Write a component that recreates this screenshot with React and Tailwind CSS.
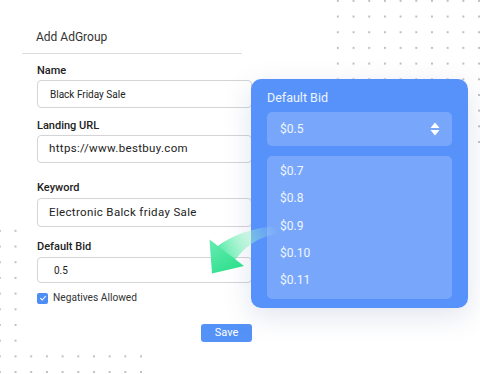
import React from "react";

const dots =
  "absolute bg-[radial-gradient(circle,#bfbfbf_0.8px,transparent_1.3px)] bg-[length:15.7px_15.7px]";

const Field = ({ label, value, className, inputClass, textClass }) => (
  <div className={className}>
    <div className="text-[11px] leading-[14px] font-medium text-[#222]">{label}</div>
    <div
      className={`flex items-center rounded-[4px] border border-[#d4d4d4] bg-white ${inputClass}`}
    >
      <span className={textClass}>{value}</span>
    </div>
  </div>
);

const BidOptions = ["$0.7", "$0.8", "$0.9", "$0.10", "$0.11"];

export default function App() {
  return (
    <div
      className="relative w-[480px] h-[374px] overflow-hidden bg-white text-[#222]"
      style={{ fontFamily: "Roboto, 'Liberation Sans', sans-serif" }}
    >
      {/* dot grids in the background */}
      <div className={`${dots} left-[330px] top-[-7px] w-[157px] h-[157px]`} />
      <div className={`${dots} left-[-8px] top-[223px] w-[157px] h-[157px]`} />

      {/* form card */}
      <div className="relative z-10 ml-[22px] w-[230px] h-[350px] bg-white pt-[27px]">
        <div className="pl-[14px] text-[12px] leading-[20px] text-[#333]">Add AdGroup</div>
        <div className="mt-[6px] w-[220px] h-px bg-[#dedede]" />

        <div className="pl-[15px]">
          <Field
            className="mt-[10px]"
            label="Name"
            value="Black Friday Sale"
            inputClass="mt-[2px] h-[28px] pl-[12px]"
            textClass="text-[10px] text-[#222]"
          />
          <Field
            className="mt-[11px]"
            label="Landing URL"
            value="https://www.bestbuy.com"
            inputClass="mt-[2px] h-[28px] pl-[11px]"
            textClass="text-[11.5px] tracking-[0.03em] text-[#222]"
          />
          <Field
            className="mt-[18px]"
            label="Keyword"
            value="Electronic Balck friday Sale"
            inputClass="mt-[3px] h-[29px] pl-[11px]"
            textClass="text-[11.5px] tracking-[0.03em] text-[#222]"
          />
          <Field
            className="mt-[13px]"
            label="Default Bid"
            value="0.5"
            inputClass="mt-[3px] h-[26px] pl-[16px]"
            textClass="text-[10px] text-[#222]"
          />

          <div className="mt-[8px] flex items-center h-[14px]">
            <span className="flex items-center justify-center w-[11px] h-[11px] rounded-[2px] bg-[#4d8df6]">
              <svg width="8" height="8" viewBox="0 0 8 8">
                <path d="M1.3 4.2 L3.2 6 L6.8 2" fill="none" stroke="#fff" strokeWidth="1.1" />
              </svg>
            </span>
            <span className="ml-[5px] text-[10.2px] text-[#333]">Negatives Allowed</span>
          </div>

          <div className="mt-[19px] flex justify-end">
            <button className="w-[51px] h-[18px] rounded-[3px] bg-[#5592f7] text-[11px] leading-[18px] text-white">
              Save
            </button>
          </div>
        </div>
      </div>

      {/* bid dropdown popover */}
      <div className="absolute z-20 left-[251px] top-[79px] w-[217px] h-[229px] rounded-[10px] bg-[#5692fa] px-[16px] pt-[10px] shadow-[0_8px_28px_rgba(70,90,150,0.16)]">
        <div className="text-[12.5px] leading-[18px] text-white/90">Default Bid</div>
        <div className="mt-[5px] h-[34px] rounded-[5px] bg-[#77a6fb] flex items-center justify-between pl-[13px] pr-[12px]">
          <span className="text-[12px] text-white/90">$0.5</span>
          <svg width="10" height="14" viewBox="0 0 10 14">
            <path d="M5 0.5 L9.5 6 L0.5 6 Z" fill="#fff" />
            <path d="M0.5 8 L9.5 8 L5 13.5 Z" fill="#fff" />
          </svg>
        </div>
        <div className="mt-[10px] h-[143px] rounded-[5px] bg-[#77a6fb] pt-[1.5px] pl-[13px]">
          {BidOptions.map((o) => (
            <div key={o} className="h-[27.25px] flex items-center text-[12px] text-white/90">
              {o}
            </div>
          ))}
        </div>
      </div>

      {/* green curved arrow */}
      <svg
        className="absolute z-30 left-[200px] top-[215px]"
        width="90"
        height="65"
        viewBox="0 0 90 65"
      >
        <defs>
          <linearGradient id="shaftGrad" x1="22" y1="40" x2="78" y2="14" gradientUnits="userSpaceOnUse">
            <stop offset="0" stopColor="#52e9a5" stopOpacity="0.95" />
            <stop offset="0.4" stopColor="#8ef1c4" stopOpacity="0.6" />
            <stop offset="1" stopColor="#c8f8e3" stopOpacity="0" />
          </linearGradient>
          <linearGradient id="headGrad" x1="12" y1="27" x2="30" y2="58" gradientUnits="userSpaceOnUse">
            <stop offset="0" stopColor="#63eab0" />
            <stop offset="1" stopColor="#2fe08c" />
          </linearGradient>
        </defs>
        <path
          d="M17 31.5 C34 19 55 12 80 11 L80 19 C60 20 46 31 35 45 Z"
          fill="url(#shaftGrad)"
        />
        <path d="M9.5 24.5 L44 51 L12 58.5 Z" fill="url(#headGrad)" />
      </svg>
    </div>
  );
}
